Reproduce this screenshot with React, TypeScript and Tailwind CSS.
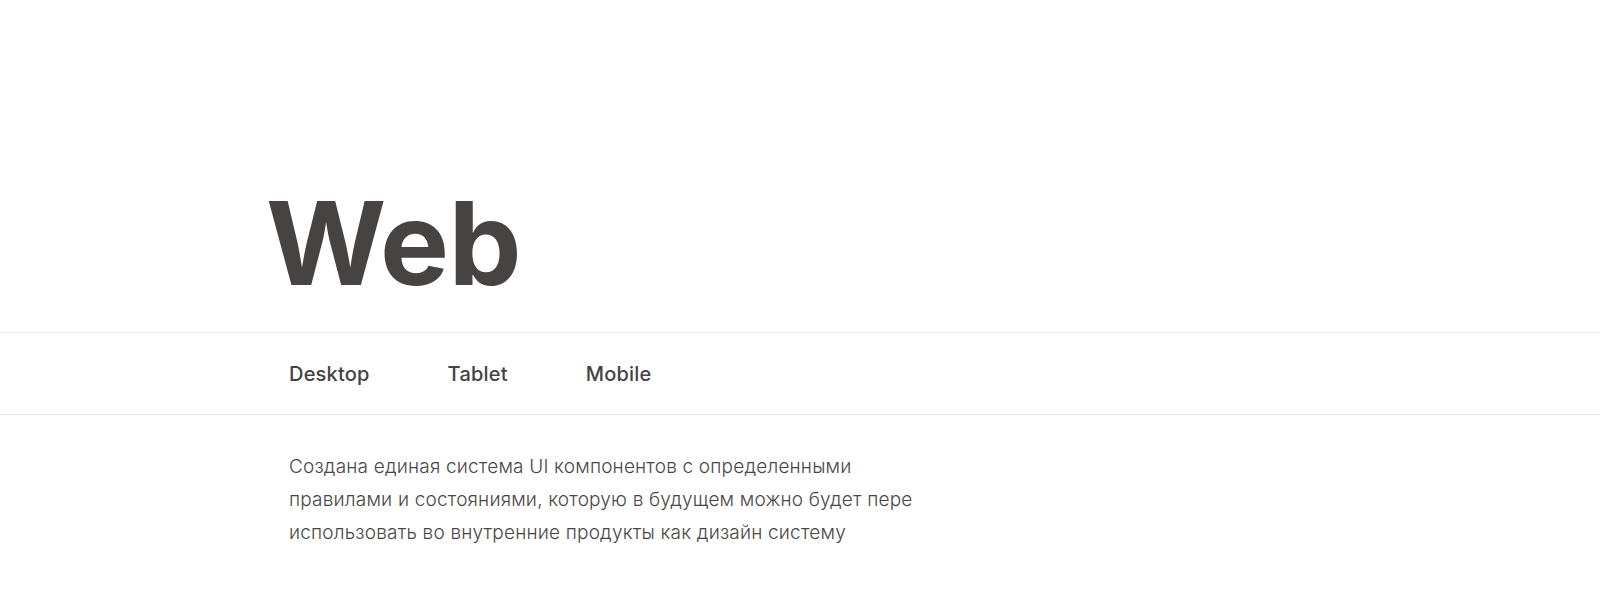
import React from 'react';

const tabs = ['Desktop', 'Tablet', 'Mobile'];

const App: React.FC = () => {
  return (
    <div className="w-full h-[606px] bg-white text-[#474342] font-['Inter',sans-serif] overflow-hidden">
      {/* Title */}
      <div className="h-[332px] pt-[185px] pl-[266px]">
        <h1 className="text-[116px] leading-none font-bold tracking-[-0.005em]">Web</h1>
      </div>

      {/* Tabs */}
      <nav className="h-[83px] border-y border-[#e8e8e8] flex items-center pl-[289px] gap-[78px]">
        {tabs.map(tab => (
          <a key={tab} href="#" className="text-[20px] leading-[28px] font-medium tracking-[0.01em] text-[#454241]">
            {tab}
          </a>
        ))}
      </nav>

      {/* Description */}
      <p className="pl-[289px] pt-[35px] text-[19px] leading-[33px] font-light tracking-[0.01em] text-[#4a4645]">
        Создана единая система UI компонентов с определенными
        <br />
        правилами и состояниями, которую в будущем можно будет пере
        <br />
        использовать во внутренние продукты как дизайн систему
      </p>
    </div>
  );
};

export default App;
